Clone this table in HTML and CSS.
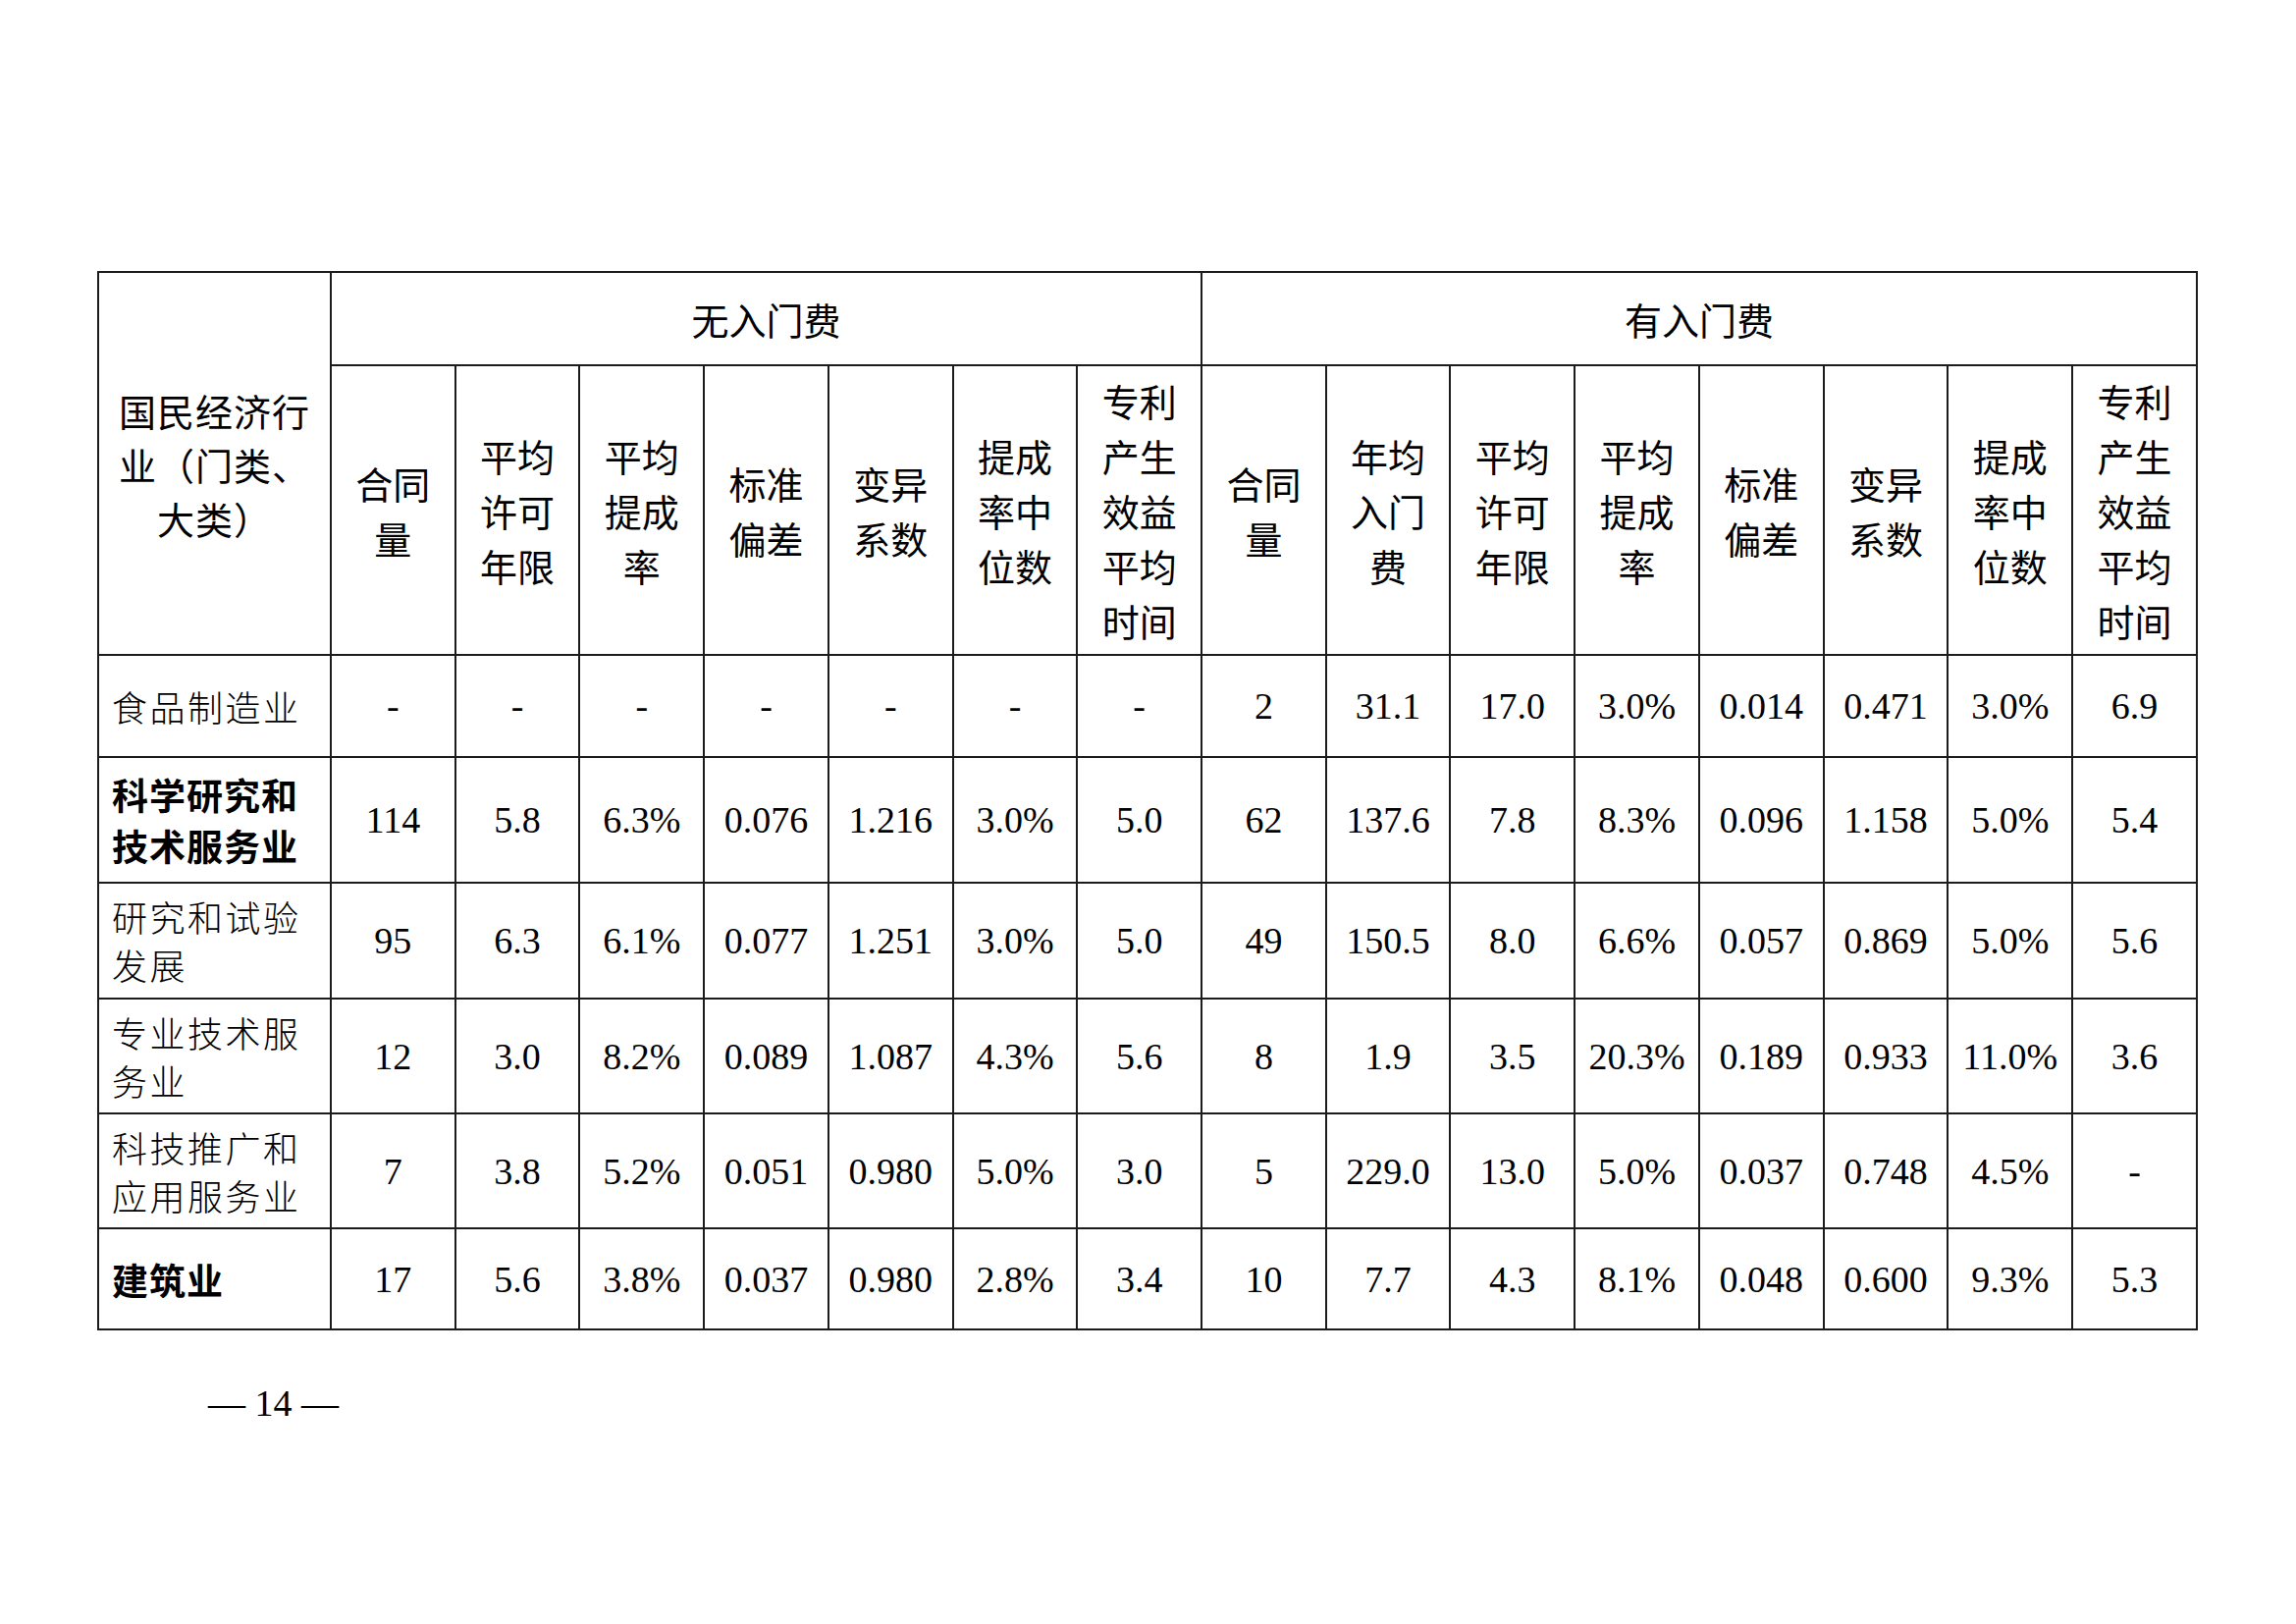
FILE: index.html
```html
<!DOCTYPE html>
<html lang="zh-CN">
<head>
<meta charset="utf-8">
<title>表</title>
<link rel="stylesheet" href="styles.css">
</head>
<body>
<div class="page">
  <table class="stats">
    <colgroup>
      <col class="c-label">
      <col><col><col><col><col><col><col>
      <col><col><col><col><col><col><col><col>
    </colgroup>
    <thead>
      <tr class="h1">
        <th class="hl" rowspan="2">国民经济行<br>业（门类、<br>大类）</th>
        <th colspan="7">无入门费</th>
        <th colspan="8">有入门费</th>
      </tr>
      <tr class="h2">
        <th>合同<br>量</th>
        <th>平均<br>许可<br>年限</th>
        <th>平均<br>提成<br>率</th>
        <th>标准<br>偏差</th>
        <th>变异<br>系数</th>
        <th>提成<br>率中<br>位数</th>
        <th>专利<br>产生<br>效益<br>平均<br>时间</th>
        <th>合同<br>量</th>
        <th>年均<br>入门<br>费</th>
        <th>平均<br>许可<br>年限</th>
        <th>平均<br>提成<br>率</th>
        <th>标准<br>偏差</th>
        <th>变异<br>系数</th>
        <th>提成<br>率中<br>位数</th>
        <th>专利<br>产生<br>效益<br>平均<br>时间</th>
      </tr>
    </thead>
    <tbody>
      <tr class="r1">
        <td class="lbl thin">食品制造业</td>
        <td>-</td><td>-</td><td>-</td><td>-</td><td>-</td><td>-</td><td>-</td>
        <td>2</td><td>31.1</td><td>17.0</td><td>3.0%</td><td>0.014</td><td>0.471</td><td>3.0%</td><td>6.9</td>
      </tr>
      <tr class="r2">
        <td class="lbl bold">科学研究和<br>技术服务业</td>
        <td>114</td><td>5.8</td><td>6.3%</td><td>0.076</td><td>1.216</td><td>3.0%</td><td>5.0</td>
        <td>62</td><td>137.6</td><td>7.8</td><td>8.3%</td><td>0.096</td><td>1.158</td><td>5.0%</td><td>5.4</td>
      </tr>
      <tr class="r3">
        <td class="lbl thin two">研究和试验<br>发展</td>
        <td>95</td><td>6.3</td><td>6.1%</td><td>0.077</td><td>1.251</td><td>3.0%</td><td>5.0</td>
        <td>49</td><td>150.5</td><td>8.0</td><td>6.6%</td><td>0.057</td><td>0.869</td><td>5.0%</td><td>5.6</td>
      </tr>
      <tr class="r4">
        <td class="lbl thin two">专业技术服<br>务业</td>
        <td>12</td><td>3.0</td><td>8.2%</td><td>0.089</td><td>1.087</td><td>4.3%</td><td>5.6</td>
        <td>8</td><td>1.9</td><td>3.5</td><td>20.3%</td><td>0.189</td><td>0.933</td><td>11.0%</td><td>3.6</td>
      </tr>
      <tr class="r5">
        <td class="lbl thin two">科技推广和<br>应用服务业</td>
        <td>7</td><td>3.8</td><td>5.2%</td><td>0.051</td><td>0.980</td><td>5.0%</td><td>3.0</td>
        <td>5</td><td>229.0</td><td>13.0</td><td>5.0%</td><td>0.037</td><td>0.748</td><td>4.5%</td><td>-</td>
      </tr>
      <tr class="r6">
        <td class="lbl bold">建筑业</td>
        <td>17</td><td>5.6</td><td>3.8%</td><td>0.037</td><td>0.980</td><td>2.8%</td><td>3.4</td>
        <td>10</td><td>7.7</td><td>4.3</td><td>8.1%</td><td>0.048</td><td>0.600</td><td>9.3%</td><td>5.3</td>
      </tr>
    </tbody>
  </table>
  <div class="pageno">— 14 —</div>
</div>
</body>
</html>
```

FILE: styles.css
```css
html, body {
  margin: 0;
  padding: 0;
  background: #ffffff;
}

.page {
  padding: 276px 0 0 99px;
  color: #000;
}

.stats {
  width: 2140px;
  border-collapse: collapse;
  table-layout: fixed;
}

.c-label {
  width: 237px;
}

.stats th,
.stats td {
  border: 2px solid #1c1c1c;
  padding: 0;
  text-align: center;
  vertical-align: middle;
}

.stats th {
  font-family: "Noto Sans CJK SC", "Noto Sans", sans-serif;
  font-weight: 400;
  font-size: 38px;
  line-height: 56px;
}

.stats th.hl {
  line-height: 55px;
  letter-spacing: 1px;
}

.h1 { height: 95px; }
.h2 { height: 295px; }
.r1 { height: 104px; }
.r2 { height: 128px; }
.r3 { height: 118px; }
.r4 { height: 117px; }
.r5 { height: 117px; }
.r6 { height: 103px; }

.stats td {
  font-family: "Liberation Serif", "Times New Roman", serif;
  font-size: 38px;
  line-height: 44px;
}

.stats td.lbl {
  text-align: left;
  padding-left: 13px;
  font-family: "Noto Sans CJK SC", "Noto Sans", sans-serif;
  font-size: 36px;
  letter-spacing: 2px;
  white-space: nowrap;
}

.stats td.thin {
  font-weight: 300;
  letter-spacing: 2.5px;
  line-height: 49px;
}

.stats td.bold {
  font-weight: 700;
  font-size: 37px;
  letter-spacing: 1px;
  line-height: 52px;
}

.pageno {
  margin: 54px 0 0 113px;
  font-family: "Liberation Serif", "Times New Roman", serif;
  font-size: 38px;
  line-height: 40px;
}
```
